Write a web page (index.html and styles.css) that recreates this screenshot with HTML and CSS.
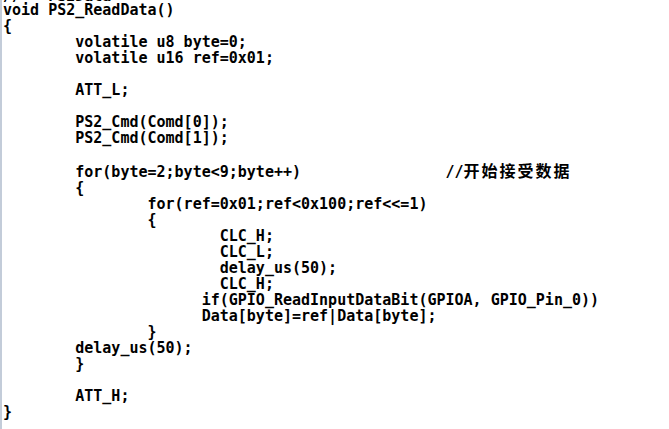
FILE: index.html
```html
<!DOCTYPE html>
<html>
<head>
<meta charset="utf-8">
<link rel="stylesheet" href="styles.css">
</head>
<body>
<div class="editor">
<pre class="code"><span class="cut">//   PS2Data</span>
void PS2_ReadData()
{
        volatile u8 byte=0;
        volatile u16 ref=0x01;

        ATT_L;

        PS2_Cmd(Comd[0]);
        PS2_Cmd(Comd[1]);

        for(byte=2;byte&lt;9;byte++)                //<span class="cjk">开始接受数据</span>
        {
                for(ref=0x01;ref&lt;0x100;ref&lt;&lt;=1)
                {
                        CLC_H;
                        CLC_L;
                        delay_us(50);
                        CLC_H;
                      if(GPIO_ReadInputDataBit(GPIOA, GPIO_Pin_0))
                      Data[byte]=ref|Data[byte];
                }
        delay_us(50);
        }

        ATT_H;
}</pre>
</div>
</body>
</html>
```

FILE: styles.css
```css
html, body {
  margin: 0;
  padding: 0;
  background: #ffffff;
  overflow: hidden;
}

.editor {
  width: 669px;
  height: 429px;
  overflow: hidden;
  border-left: 2px solid #c3ccd9;
  box-sizing: border-box;
  background: #ffffff;
}

.code {
  margin: -14px 0 0 0;
  padding: 0 0 0 1px;
  font-family: "DejaVu Sans Mono", "Liberation Mono", monospace;
  font-weight: bold;
  font-size: 15px;
  line-height: 16px;
  color: #000000;
  white-space: pre;
}

.cut {
  position: relative;
  top: 2px;
}

.cjk {
  font-family: "Noto Sans CJK SC", sans-serif;
  font-size: 16px;
  letter-spacing: 2px;
  font-weight: bold;
}
```
